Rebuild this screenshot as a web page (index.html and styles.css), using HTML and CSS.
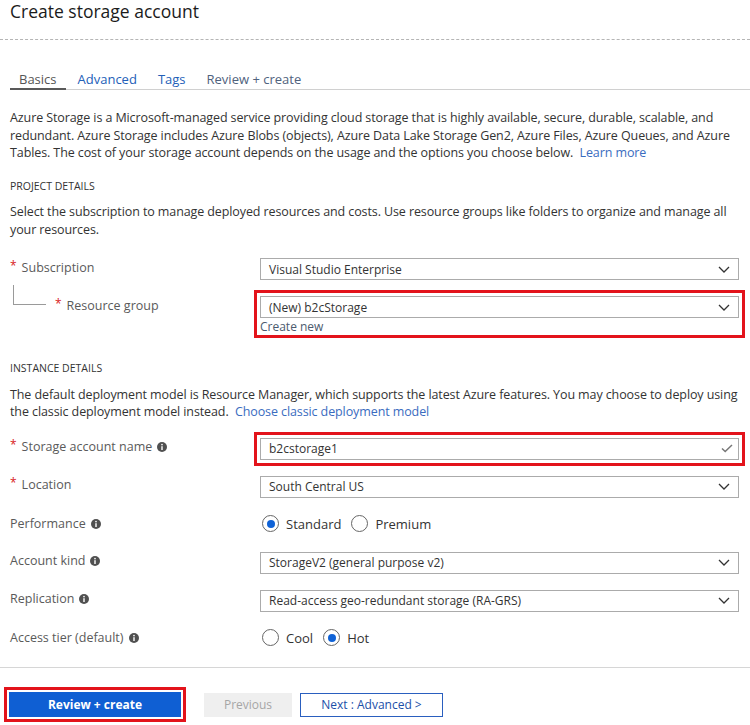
FILE: index.html
```html
<!DOCTYPE html>
<html lang="en">
<head>
<meta charset="utf-8">
<title>Create storage account</title>
<link rel="stylesheet" href="styles.css">
</head>
<body>
<div class="page">
  <header class="header">
    <h1 class="title">Create storage account</h1>
  </header>

  <nav class="tabs">
    <span class="tab tab-active">Basics</span>
    <span class="tab tab-link">Advanced</span>
    <span class="tab tab-link">Tags</span>
    <span class="tab tab-muted">Review + create</span>
  </nav>

  <main class="content">
    <p class="intro">Azure Storage is a Microsoft-managed service providing cloud storage that is highly available, secure, durable, scalable, and redundant. Azure Storage includes Azure Blobs (objects), Azure Data Lake Storage Gen2, Azure Files, Azure Queues, and Azure Tables. The cost of your storage account depends on the usage and the options you choose below. &nbsp;<a class="link">Learn more</a></p>

    <h2 class="section-title section-project">PROJECT DETAILS</h2>
    <p class="section-text">Select the subscription to manage deployed resources and costs. Use resource groups like folders to organize and manage all your resources.</p>

    <div class="form form-project">
      <div class="row">
        <div class="label"><span class="star">*</span>Subscription</div>
        <div class="control">
          <div class="select"><span>Visual Studio Enterprise</span>
            <svg class="chev" width="12" height="7" viewBox="0 0 12 7"><polyline points="1,1 6,6 11,1" fill="none" stroke="#333" stroke-width="1.3"/></svg>
          </div>
        </div>
      </div>
      <div class="row">
        <div class="label label-child"><span class="tree"></span><span class="star">*</span>Resource group</div>
        <div class="control">
          <div class="highlight">
            <div class="select"><span>(New) b2cStorage</span>
              <svg class="chev" width="12" height="7" viewBox="0 0 12 7"><polyline points="1,1 6,6 11,1" fill="none" stroke="#333" stroke-width="1.3"/></svg>
            </div>
            <div class="create-new">Create new</div>
          </div>
        </div>
      </div>
    </div>

    <h2 class="section-title section-instance">INSTANCE DETAILS</h2>
    <p class="section-text">The default deployment model is Resource Manager, which supports the latest Azure features. You may choose to deploy using the classic deployment model instead. &nbsp;<a class="link">Choose classic deployment model</a></p>

    <div class="form form-instance">
      <div class="row">
        <div class="label"><span class="star">*</span>Storage account name <svg class="info" width="10" height="10" viewBox="0 0 10 10"><circle cx="5" cy="5" r="5" fill="#505050"/><rect x="4.3" y="4.2" width="1.4" height="3.8" fill="#fff"/><circle cx="5" cy="2.6" r="0.85" fill="#fff"/></svg></div>
        <div class="control">
          <div class="highlight">
            <div class="select"><span>b2cstorage1</span>
              <svg class="check" width="12" height="9" viewBox="0 0 12 9"><polyline points="1,4.5 4.2,7.5 11,1" fill="none" stroke="#777" stroke-width="1.5"/></svg>
            </div>
          </div>
        </div>
      </div>
      <div class="row">
        <div class="label"><span class="star">*</span>Location</div>
        <div class="control">
          <div class="select"><span>South Central US</span>
            <svg class="chev" width="12" height="7" viewBox="0 0 12 7"><polyline points="1,1 6,6 11,1" fill="none" stroke="#333" stroke-width="1.3"/></svg>
          </div>
        </div>
      </div>
      <div class="row row-radio">
        <div class="label">Performance <svg class="info" width="10" height="10" viewBox="0 0 10 10"><circle cx="5" cy="5" r="5" fill="#505050"/><rect x="4.3" y="4.2" width="1.4" height="3.8" fill="#fff"/><circle cx="5" cy="2.6" r="0.85" fill="#fff"/></svg></div>
        <div class="control radios">
          <label class="radio"><span class="dot dot-on"></span>Standard</label>
          <label class="radio"><span class="dot"></span>Premium</label>
        </div>
      </div>
      <div class="row">
        <div class="label">Account kind <svg class="info" width="10" height="10" viewBox="0 0 10 10"><circle cx="5" cy="5" r="5" fill="#505050"/><rect x="4.3" y="4.2" width="1.4" height="3.8" fill="#fff"/><circle cx="5" cy="2.6" r="0.85" fill="#fff"/></svg></div>
        <div class="control">
          <div class="select"><span>StorageV2 (general purpose v2)</span>
            <svg class="chev" width="12" height="7" viewBox="0 0 12 7"><polyline points="1,1 6,6 11,1" fill="none" stroke="#333" stroke-width="1.3"/></svg>
          </div>
        </div>
      </div>
      <div class="row">
        <div class="label">Replication <svg class="info" width="10" height="10" viewBox="0 0 10 10"><circle cx="5" cy="5" r="5" fill="#505050"/><rect x="4.3" y="4.2" width="1.4" height="3.8" fill="#fff"/><circle cx="5" cy="2.6" r="0.85" fill="#fff"/></svg></div>
        <div class="control">
          <div class="select"><span>Read-access geo-redundant storage (RA-GRS)</span>
            <svg class="chev" width="12" height="7" viewBox="0 0 12 7"><polyline points="1,1 6,6 11,1" fill="none" stroke="#333" stroke-width="1.3"/></svg>
          </div>
        </div>
      </div>
      <div class="row row-radio">
        <div class="label">Access tier (default) <svg class="info" width="10" height="10" viewBox="0 0 10 10"><circle cx="5" cy="5" r="5" fill="#505050"/><rect x="4.3" y="4.2" width="1.4" height="3.8" fill="#fff"/><circle cx="5" cy="2.6" r="0.85" fill="#fff"/></svg></div>
        <div class="control radios">
          <label class="radio"><span class="dot"></span>Cool</label>
          <label class="radio"><span class="dot dot-on"></span>Hot</label>
        </div>
      </div>
    </div>
  </main>

  <footer class="footer">
    <div class="btn-highlight"><button class="btn btn-primary">Review + create</button></div>
    <button class="btn btn-disabled">Previous</button>
    <button class="btn btn-secondary">Next : Advanced &gt;</button>
  </footer>
</div>
</body>
</html>
```

FILE: styles.css
```css
* { box-sizing: border-box; }

html, body {
  margin: 0;
  padding: 0;
  background: #fff;
}

body {
  font-family: "Segoe UI", "Open Sans", "Liberation Sans", sans-serif;
  font-size: 12.5px;
  color: #333;
  width: 750px;
  overflow: hidden;
}

.page {
  width: 750px;
}

.header {
  height: 40px;
  border-bottom: 1px dashed #b5b5b5;
  padding: 0 10px;
}

.title {
  margin: 0;
  font-size: 17.5px;
  font-weight: 400;
  color: #1b1b1b;
  line-height: 22px;
  padding-top: 0;
}

.tabs {
  display: flex;
  gap: 3px;
  margin-left: 10px;
  height: 50px;
  align-items: flex-end;
  border-bottom: 1px solid #d0d0d0;
}

.tab {
  padding: 0 9px 0;
  height: 21px;
  line-height: 20px;
  font-size: 13px;
  border-bottom: 2px solid transparent;
  margin-bottom: -1px;
}

.tab-active { color: #555; border-bottom-color: #595959; }
.tab-link { color: #2360b8; }
.tab-muted { color: #50627d; }

.content {
  padding: 0 11px 0 10px;
}

.intro, .section-text {
  margin: 0;
  line-height: 17.5px;
  color: #333;
  letter-spacing: -0.1px;
}

.intro { margin-top: 19px; }

.link { color: #3a6cc0; text-decoration: none; }

.section-title {
  margin: 0;
  font-size: 10.5px;
  font-weight: 400;
  line-height: 17.5px;
  color: #333;
}

.section-project { margin-top: 16px; }
.section-instance { margin-top: 28px; }

.section-text { margin-top: 8px; }

.form {
  display: flex;
  flex-direction: column;
  gap: 16px;
}

.form-project { margin-top: 20px; }
.form-instance { margin-top: 17px; }

.row {
  display: grid;
  grid-template-columns: 250px 1fr;
  align-items: start;
}

.row-radio {
  padding-bottom: 2px;
}

.label {
  display: flex;
  align-items: center;
  height: 18px;
  color: #5a5a5a;
  font-size: 12.5px;
}

.row-radio .label {
  height: 20px;
}

.label-child {
  padding-left: 3px;
}

.tree {
  width: 33px;
  height: 20px;
  border-left: 1px solid #9a9a9a;
  border-bottom: 1px solid #9a9a9a;
  margin-top: -20px;
  margin-right: 9px;
  flex-shrink: 0;
}

.star {
  color: #d81b1b;
  margin-right: 5px;
  font-size: 12px;
  position: relative;
  top: -2px;
}

.info {
  margin-left: 5px;
  flex-shrink: 0;
}

.select {
  height: 22px;
  border: 1px solid #ababab;
  display: flex;
  align-items: center;
  justify-content: space-between;
  padding: 0 8px 0 8px;
  color: #333;
  font-size: 12px;
  background: #fff;
}

.check { margin-right: -3px; }

.highlight {
  margin: -6px;
  padding: 3px;
  border: 3px solid #e3131b;
}

.create-new {
  font-size: 12px;
  color: #4b5a6e;
  line-height: 17px;
  padding-top: 0;
  margin-bottom: -3px;
}

.radios {
  display: flex;
  align-items: center;
  gap: 10px;
  height: 20px;
  padding-left: 2px;
}

.radio {
  display: flex;
  align-items: center;
  gap: 7px;
  font-size: 13px;
  color: #333;
}

.dot {
  width: 17px;
  height: 17px;
  border: 1px solid #666;
  border-radius: 50%;
  display: flex;
  align-items: center;
  justify-content: center;
}

.dot-on::after {
  content: "";
  width: 8px;
  height: 8px;
  border-radius: 50%;
  background: #0f62d6;
}

.footer {
  margin-top: 17px;
  border-top: 1px solid #d6d6d6;
  padding: 19px 0 0 4px;
  display: flex;
  align-items: flex-start;
}

.btn-highlight {
  border: 3px solid #e3131b;
  padding: 2px;
}

.btn {
  font-family: inherit;
  font-size: 12px;
  height: 25px;
  margin: 0;
  padding: 0;
  cursor: pointer;
}

.btn-primary {
  width: 172px;
  background: #0f5fd3;
  color: #fff;
  font-weight: 700;
  border: 1px solid #0f5fd3;
}

.btn-disabled {
  margin-top: 6px;
  margin-left: 18px;
  width: 88px;
  height: 24px;
  background: #efefef;
  color: #a6a6a6;
  border: 1px solid #efefef;
}

.btn-secondary {
  margin-top: 6px;
  margin-left: 8px;
  width: 143px;
  height: 24px;
  background: #fff;
  color: #1b4fa8;
  border: 1px solid #2a5fbf;
}
```
